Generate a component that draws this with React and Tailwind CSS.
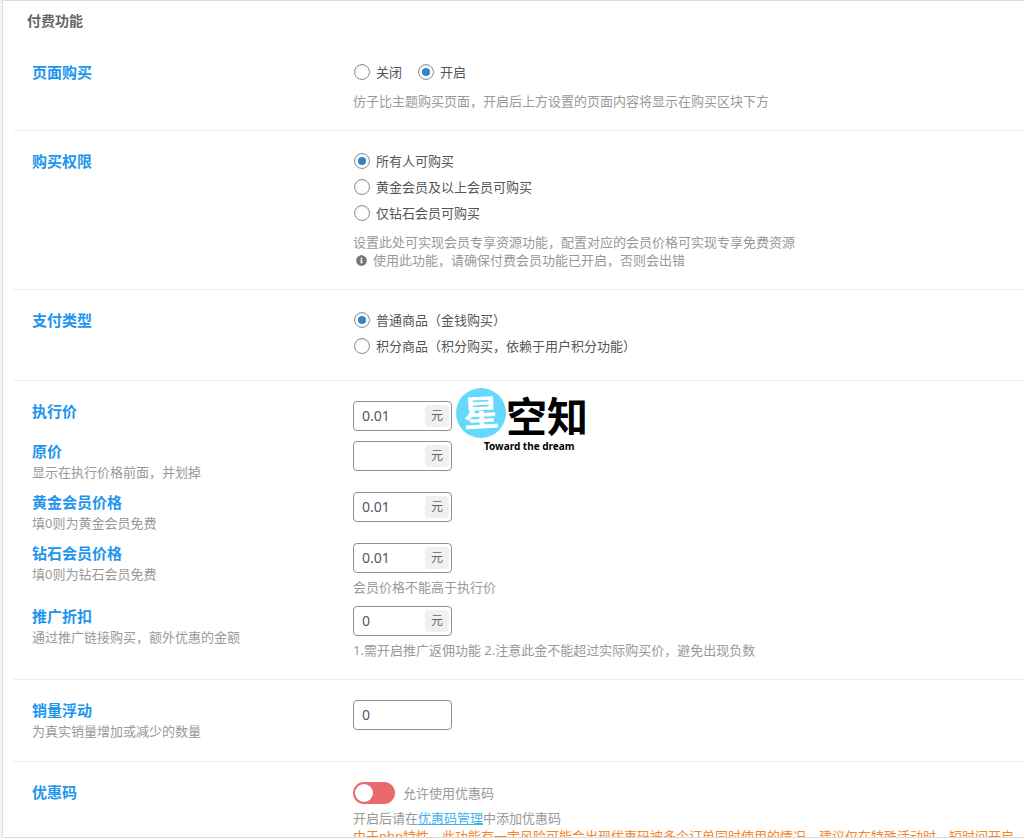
import React from 'react';
import { FaInfoCircle } from 'react-icons/fa';

const Section = ({ children, last = false }) => (
  <section className={`ml-2.5 flex flex-col gap-2.5 py-5 pl-[19px] pr-4 ${last ? '' : 'border-b border-[#eeeeee]'}`}>
    {children}
  </section>
);

const Row = ({ title, hint, htmlFor, children }) => (
  <div className="flex items-start">
    <div className="w-[321px] shrink-0">
      <label htmlFor={htmlFor} className="block text-[15px] leading-5 font-bold text-[#1e95ee]">
        {title}
      </label>
      {hint && <p className="mt-px text-[13px] leading-5 text-[#999999]">{hint}</p>}
    </div>
    <div className="min-w-0 flex-1">{children}</div>
  </div>
);

const Radio = ({ name, label, checked = false }) => (
  <label className="flex items-center gap-1.5 pl-px text-[13px] leading-5 text-[#555555]">
    <input
      type="radio"
      name={name}
      defaultChecked={checked}
      className="grid size-4 shrink-0 appearance-none place-items-center rounded-full border border-[#8c8f94] bg-white shadow-[inset_0_1px_2px_rgba(0,0,0,0.1)] before:size-2 before:rounded-full before:content-[''] checked:before:bg-[#3582c4]"
    />
    {label}
  </label>
);

const NumberBox = ({ id, value, unit }) => (
  <div className="flex h-[30px] w-[99px] items-center rounded border border-[#8c8f94] bg-white pr-0.5">
    <input
      id={id}
      type="text"
      defaultValue={value}
      className="h-full w-full min-w-0 flex-1 bg-transparent pb-0.5 pl-2 text-sm text-[#50575e] outline-none"
    />
    {unit && (
      <span className="flex h-[22px] w-6 shrink-0 items-center justify-center rounded-sm bg-[#f0f0f0] text-xs text-[#666666]">
        {unit}
      </span>
    )}
  </div>
);

const Desc = ({ className = '', children }) => (
  <div className={`text-[13px] leading-[18px] text-[#999999] ${className}`}>{children}</div>
);

const Watermark = () => (
  <div className="pointer-events-none absolute top-[387px] left-[453px] flex text-black">
    <div className="flex size-[50px] items-center justify-center rounded-full bg-[#63dafc] text-[36px] leading-none font-bold text-white">
      <span className="-rotate-3">星</span>
    </div>
    <div className="flex flex-col pt-1">
      <span className="h-12 text-[41px] leading-[48px] font-bold">空知</span>
      <span className="-ml-[22px] text-[10px] leading-3 font-bold whitespace-nowrap">Toward the dream</span>
    </div>
  </div>
);

export default function App() {
  return (
    <div className="h-screen overflow-hidden bg-[#f3f3f3] pl-0.5 font-['Noto_Sans','Noto_Sans_CJK_SC',sans-serif]">
      <main className="relative h-full overflow-hidden border-t border-b border-l border-[#dcdcdc] bg-white">
        <h1 className="flex h-[41px] items-center pb-0.5 pl-6 text-sm font-bold text-[#666666]">付费功能</h1>

        <Section>
          <Row title="页面购买">
            <div className="flex gap-[15px]">
              <Radio name="page" label="关闭" />
              <Radio name="page" label="开启" checked />
            </div>
            <Desc className="mt-2.5">仿子比主题购买页面，开启后上方设置的页面内容将显示在购买区块下方</Desc>
          </Row>
        </Section>

        <Section>
          <Row title="购买权限">
            <div className="flex flex-col gap-1.5">
              <Radio name="limit" label="所有人可购买" checked />
              <Radio name="limit" label="黄金会员及以上会员可购买" />
              <Radio name="limit" label="仅钻石会员可购买" />
            </div>
            <Desc className="mt-2.5">
              设置此处可实现会员专享资源功能，配置对应的会员价格可实现专享免费资源
              <div className="flex items-center gap-1.5 pl-[3px]">
                <FaInfoCircle className="size-[11px] text-[#777777]" />
                使用此功能，请确保付费会员功能已开启，否则会出错
              </div>
            </Desc>
          </Row>
        </Section>

        <Section>
          <Row title="支付类型">
            <div className="flex flex-col gap-1.5 pb-1">
              <Radio name="type" label="普通商品（金钱购买）" checked />
              <Radio name="type" label="积分商品（积分购买，依赖于用户积分功能）" />
            </div>
          </Row>
        </Section>

        <Section>
          <Row title="执行价" htmlFor="price">
            <NumberBox id="price" value="0.01" unit="元" />
          </Row>
          <Row title="原价" hint="显示在执行价格前面，并划掉" htmlFor="original">
            <NumberBox id="original" value="" unit="元" />
          </Row>
          <Row title="黄金会员价格" hint="填0则为黄金会员免费" htmlFor="gold">
            <NumberBox id="gold" value="0.01" unit="元" />
          </Row>
          <Row title="钻石会员价格" hint="填0则为钻石会员免费" htmlFor="diamond">
            <NumberBox id="diamond" value="0.01" unit="元" />
            <Desc className="mt-[5px]">会员价格不能高于执行价</Desc>
          </Row>
          <Row title="推广折扣" hint="通过推广链接购买，额外优惠的金额" htmlFor="discount">
            <NumberBox id="discount" value="0" unit="元" />
            <Desc className="mt-[5px]">1.需开启推广返佣功能 2.注意此金不能超过实际购买价，避免出现负数</Desc>
          </Row>
        </Section>

        <Section>
          <Row title="销量浮动" hint="为真实销量增加或减少的数量" htmlFor="sales">
            <NumberBox id="sales" value="0" />
          </Row>
        </Section>

        <Section last>
          <Row title="优惠码" htmlFor="coupon">
            <div className="flex items-center gap-2 text-[13px] leading-5 text-[#999999]">
              <input
                id="coupon"
                type="checkbox"
                role="switch"
                className="flex h-[22px] w-[42px] appearance-none items-center rounded-full bg-[#e96a6a] px-0.5 before:size-[18px] before:rounded-full before:bg-white before:content-[''] checked:justify-end checked:bg-[#4fb845]"
              />
              <label htmlFor="coupon">允许使用优惠码</label>
            </div>
            <Desc className="mt-[5px]">
              开启后请在
              <a href="#coupons" className="text-[#3db0f0] underline">
                优惠码管理
              </a>
              中添加优惠码
              <p className="whitespace-nowrap text-[#f5872a]">
                由于php特性，此功能有一定风险可能会出现优惠码被多个订单同时使用的情况，建议仅在特殊活动时，短时间开启
              </p>
            </Desc>
          </Row>
        </Section>

        <Watermark />
      </main>
    </div>
  );
}
